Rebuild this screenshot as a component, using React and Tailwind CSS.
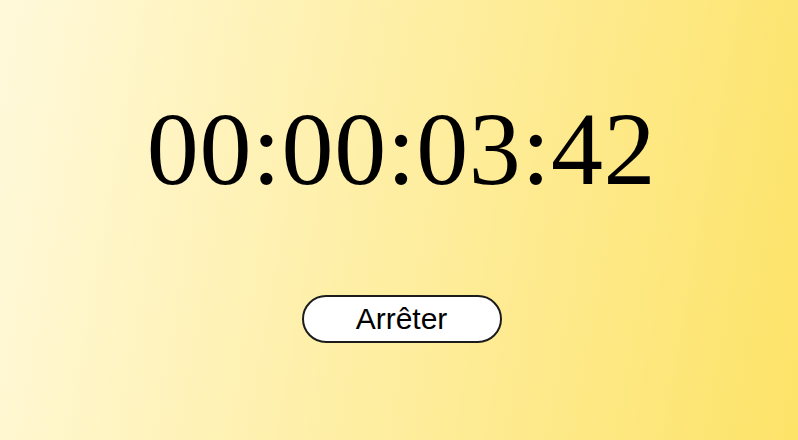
export default function App() {
  return (
    <div className="w-[798px] h-[440px] flex flex-col items-center pl-[5px] bg-[linear-gradient(100deg,#fff9db_0%,#fde368_100%)]">
      <div className="mt-[93px] text-[104px] leading-[112px] tracking-[0.6px] text-black font-['Liberation_Serif',serif]">
        00:00:03:42
      </div>
      <button className="mt-[90px] w-[200px] h-[48px] rounded-full border-2 border-[#1c1c1c] bg-white text-[30px] leading-none text-black font-['Liberation_Sans',sans-serif]">
        Arrêter
      </button>
    </div>
  );
}
